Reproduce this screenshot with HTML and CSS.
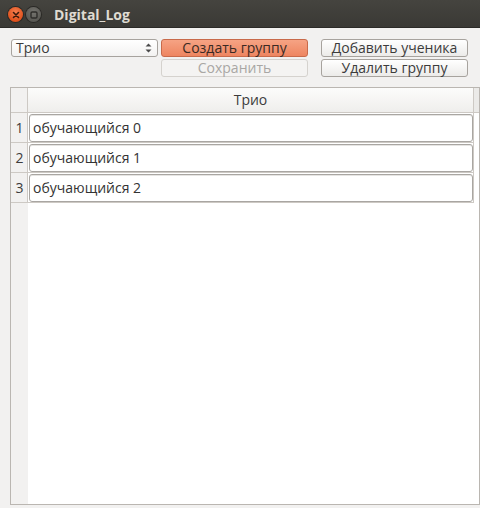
FILE: index.html
```html
<!DOCTYPE html>
<html>
<head>
<meta charset="utf-8">
<link rel="stylesheet" href="styles.css">
</head>
<body>
<div class="titlebar">
  <span class="wbtn close"><svg width="14" height="14" viewBox="0 0 14 14"><path d="M4.5 4.5 L9.5 9.5 M9.5 4.5 L4.5 9.5" stroke="#3a1a0c" stroke-width="1.6" stroke-linecap="round"/></svg></span>
  <span class="wbtn mini"><svg width="14" height="14" viewBox="0 0 14 14"><rect x="4" y="4" width="6" height="6" rx="1.2" fill="none" stroke="#2e2d2a" stroke-width="1.4"/></svg></span>
  <span class="title">Digital_Log</span>
</div>
<div class="content">
  <div class="controls">
    <div class="combo">
      <span class="combo-text">Трио</span>
      <svg class="arrows" width="7" height="12" viewBox="0 0 7 12"><path d="M0.5 4.5 L3.5 1.5 L6.5 4.5 Z M0.5 7.5 L3.5 10.5 L6.5 7.5 Z" fill="#4a4a4a"/></svg>
    </div>
    <div class="col col-mid">
      <button class="btn primary">Создать группу</button>
      <button class="btn disabled">Сохранить</button>
    </div>
    <div class="col">
      <button class="btn">Добавить ученика</button>
      <button class="btn">Удалить группу</button>
    </div>
  </div>
  <div class="table">
    <div class="corner"></div>
    <div class="hhead">Трио</div>
    <div class="hgap"></div>

    <div class="vhead">1</div>
    <div class="cell"><div class="editor">обучающийся 0</div></div>
    <div class="rgap"></div>

    <div class="vhead">2</div>
    <div class="cell"><div class="editor">обучающийся 1</div></div>
    <div class="rgap"></div>

    <div class="vhead">3</div>
    <div class="cell"><div class="editor">обучающийся 2</div></div>
    <div class="rgap"></div>

    <div class="vfill"></div>
    <div class="fill"></div>
    <div class="rgap"></div>
  </div>
</div>
</body>
</html>
```
FILE: styles.css
```css
* { box-sizing: border-box; }
html, body { margin: 0; padding: 0; }
body {
  width: 480px;
  height: 508px;
  background: #f2f1f0;
  font-family: "Open Sans", "DejaVu Sans", sans-serif;
  font-size: 14px;
  color: #3c3c3c;
  overflow: hidden;
  display: flex;
  flex-direction: column;
}
.titlebar {
  height: 28px;
  flex: none;
  background: linear-gradient(#45443f, #3a3935);
  display: flex;
  align-items: center;
  padding-left: 8px;
  padding-top: 2px;
  border-bottom: 1px solid #2b2a27;
}
.wbtn {
  width: 15px;
  height: 15px;
  border-radius: 50%;
  display: flex;
  align-items: center;
  justify-content: center;
  margin-right: 3px;
}
.close {
  background: radial-gradient(circle at 50% 35%, #f57e4f, #e0511c 70%, #c8410f);
  box-shadow: 0 0 0 1px #2a2926;
}
.mini {
  background: radial-gradient(circle at 50% 35%, #75746f, #5a5954 70%, #4d4c48);
  box-shadow: 0 0 0 1px #2a2926;
}
.title {
  margin-left: 10px;
  color: #dfdbd2;
  font-weight: bold;
  font-size: 14px;
  font-family: "Open Sans", "DejaVu Sans", sans-serif;
}
.content {
  flex: 1;
  display: flex;
  flex-direction: column;
  padding: 11px 0 3px 10px;
}
.controls {
  display: flex;
  align-items: flex-start;
  padding-left: 1px;
}
.combo {
  width: 147px;
  height: 18px;
  border: 1px solid #a7a39e;
  border-radius: 3px;
  background: linear-gradient(#ffffff, #f3f2f1);
  display: flex;
  align-items: center;
  justify-content: space-between;
  padding: 0 5px 0 4px;
  margin-right: 3px;
}
.combo-text { line-height: 16px; color: #3c3c3c; }
.arrows { flex: none; }
.col {
  display: flex;
  flex-direction: column;
  gap: 2px;
}
.col-mid { margin-right: 13px; }
.btn {
  width: 147px;
  height: 18px;
  padding: 0;
  font-family: inherit;
  font-size: 14px;
  line-height: 16px;
  color: #3c3c3c;
  border: 1px solid #a7a39e;
  border-radius: 3px;
  background: linear-gradient(#ffffff, #ecebe9);
}
.btn.primary {
  background: linear-gradient(#f6a384, #ee8560);
  border-color: #c86a4a;
  color: #3a2a24;
}
.btn.disabled {
  background: #f4f3f2;
  border-color: #d5d2ce;
  color: #a9a7a4;
}
.table {
  margin-top: 10px;
  flex: 1;
  width: 470px;
  border: 1px solid #bab6b1;
  background: #ffffff;
  display: grid;
  grid-template-columns: 17px 446px 5px;
  grid-template-rows: 25px 30px 30px 30px 1fr;
}
.corner {
  background: #f2f1f0;
  border-right: 1px solid #cdc9c4;
  border-bottom: 1px solid #cdc9c4;
}
.hhead {
  background: linear-gradient(#fcfcfb, #efeeec);
  border-right: 1px solid #cdc9c4;
  border-bottom: 1px solid #cdc9c4;
  text-align: center;
  line-height: 24px;
}
.hgap { background: #ebeae8; border-bottom: 1px solid #cdc9c4; }
.vhead {
  background: #f2f1f0;
  border-right: 1px solid #cdc9c4;
  border-bottom: 1px solid #cdc9c4;
  text-align: center;
  line-height: 29px;
  padding-left: 1px;
}
.cell {
  border-right: 1px solid #cdc9c4;
  border-bottom: 1px solid #cdc9c4;
  padding: 1px 0 0 1px;
}
.editor {
  height: 28px;
  border: 1px solid #a9a6a2;
  border-radius: 3px;
  background: #ffffff;
  padding-left: 3px;
  line-height: 26px;
  color: #333333;
  box-shadow: inset 0 1px 0 #e6e5e3;
}
.rgap { background: #ffffff; }
.vfill {
  background: #f2f1f0;
  border-right: 1px solid #f2f1f0;
}
.fill { background: #ffffff; }
```
